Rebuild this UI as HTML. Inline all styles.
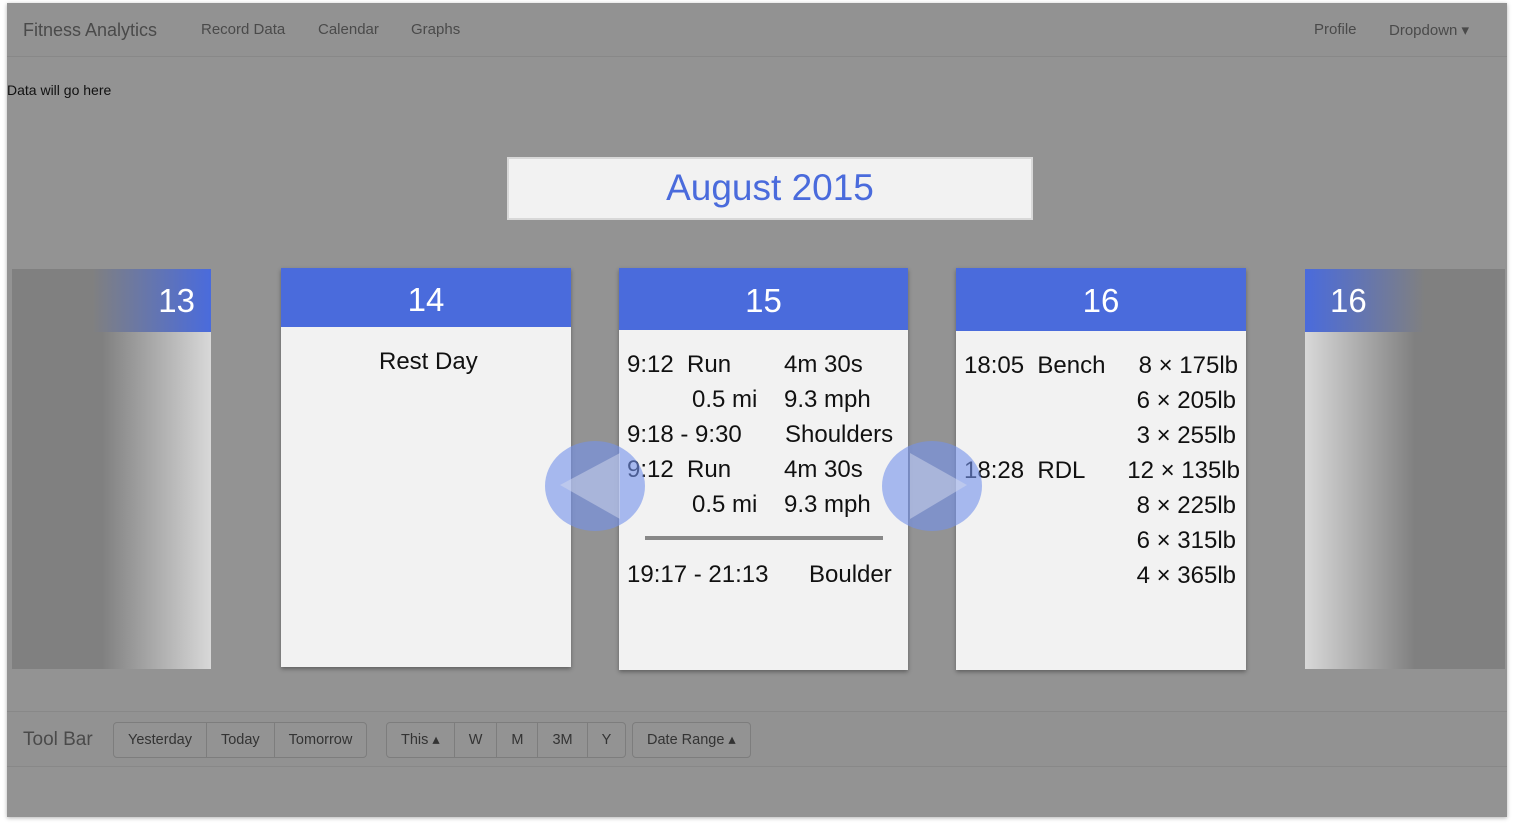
<!DOCTYPE html>
<html><head><style>
*{margin:0;padding:0;box-sizing:border-box}
body{width:1514px;height:827px;background:#fff;position:relative;overflow:hidden;font-family:"Liberation Sans",sans-serif}
.page{position:absolute;left:7px;top:3px;width:1500px;height:814px;background:#939393;box-shadow:0 1px 4px rgba(0,0,0,.3)}
.nav{position:absolute;left:0;top:0;width:1500px;height:54px;border-bottom:1px solid #888;background:#929292}
.nav span{position:absolute;top:18px;font-size:15px;color:#4a4a4a}
.a{position:absolute;font-family:"Liberation Sans",sans-serif}
.card{position:absolute;background:#f2f2f2;box-shadow:0 2px 4px rgba(0,0,0,.35)}
.hd{position:absolute;left:0;top:0;width:100%;background:#4a6bdc;color:#fff;font-size:33px;text-align:center}
.t{position:absolute;font-size:24px;color:#111;white-space:nowrap}
.circ{position:absolute;width:100px;height:90px;border-radius:50%;background:rgba(115,145,235,.6)}
.tb{position:absolute;left:0;top:708px;width:1500px;height:56px;border-top:1px solid #888;border-bottom:1px solid #888;background:#929292}
.grp{position:absolute;top:10px;height:36px;border:1px solid #7d7d7d;border-radius:4px;display:flex;background:#939393}
.grp div{height:34px;line-height:34px;font-size:14.5px;color:#333;padding:0 14px;border-left:1px solid #7d7d7d}
.grp div:first-child{border-left:none}
</style></head><body>
<div class="page">
 <div class="nav">
  <span style="left:16px;top:17px;font-size:18px">Fitness Analytics</span>
  <span style="left:194px">Record Data</span>
  <span style="left:311px">Calendar</span>
  <span style="left:404px">Graphs</span>
  <span style="left:1307px">Profile</span>
  <span style="left:1382px">Dropdown ▾</span>
 </div>
 <div class="a" style="left:0;top:79px;font-size:14px;color:#111">Data will go here</div>
 <div class="a" style="left:500px;top:154px;width:526px;height:63px;background:#f2f2f2;border:2px solid #d8d8d8;text-align:center;font-size:37px;line-height:58px;color:#4a6bdc">August 2015</div>
 <div class="tb">
  <span class="a" style="left:16px;top:17px;font-size:19px;color:#4a4a4a">Tool Bar</span>
  <div class="grp" style="left:106px"><div>Yesterday</div><div>Today</div><div>Tomorrow</div></div>
  <div class="grp" style="left:379px"><div>This ▴</div><div>W</div><div>M</div><div>3M</div><div>Y</div></div>
  <div class="grp" style="left:625px"><div>Date Range ▴</div></div>
 </div>
</div>
<div class="card" style="left:12px;top:269px;width:199px;height:400px;background:linear-gradient(90deg,#808080 0,#808080 90px,#d8d8d8 199px);box-shadow:none">
 <div class="hd" style="height:63px;line-height:63px;text-align:right;padding-right:16px;background:linear-gradient(90deg,#808080 0,#808080 80px,#4a6bdc 199px)">13</div>
</div>
<div class="card" style="left:1305px;top:269px;width:200px;height:400px;background:linear-gradient(90deg,#d8d8d8 0,#808080 110px,#808080 200px);box-shadow:none">
 <div class="hd" style="height:63px;line-height:63px;text-align:left;padding-left:25px;background:linear-gradient(90deg,#4a6bdc 0,#808080 120px,#808080 200px)">16</div>
</div>
<div class="card" style="left:281px;top:268px;width:290px;height:399px">
 <div class="hd" style="height:59px;line-height:64px">14</div>
 <div class="t" style="left:98px;top:80px">Rest Day</div>
</div>
<div class="card" style="left:619px;top:268px;width:289px;height:402px">
 <div class="hd" style="height:62px;line-height:65px">15</div>
 <div class="t" style="left:8px;top:83px">9:12&nbsp; Run</div><div class="t" style="left:165px;top:83px">4m 30s</div>
 <div class="t" style="left:73px;top:118px">0.5 mi</div><div class="t" style="left:165px;top:118px">9.3 mph</div>
 <div class="t" style="left:8px;top:153px">9:18 - 9:30</div><div class="t" style="left:166px;top:153px">Shoulders</div>
 <div class="t" style="left:8px;top:188px">9:12&nbsp; Run</div><div class="t" style="left:165px;top:188px">4m 30s</div>
 <div class="t" style="left:73px;top:223px">0.5 mi</div><div class="t" style="left:165px;top:223px">9.3 mph</div>
 <div style="position:absolute;left:26px;top:268px;width:238px;height:4px;background:#888"></div>
 <div class="t" style="left:8px;top:293px">19:17 - 21:13</div><div class="t" style="left:190px;top:293px">Boulder</div>
</div>
<div class="card" style="left:956px;top:268px;width:290px;height:402px">
 <div class="hd" style="height:63px;line-height:65px">16</div>
 <div class="t" style="left:8px;top:84px">18:05&nbsp; Bench</div>
 <div class="t" style="left:8px;top:189px">18:28&nbsp; RDL</div>
 <div class="t" style="right:8px;top:84px">8 × 175lb</div>
 <div class="t" style="right:10px;top:119px">6 × 205lb</div>
 <div class="t" style="right:10px;top:154px">3 × 255lb</div>
 <div class="t" style="right:6px;top:189px">12 × 135lb</div>
 <div class="t" style="right:10px;top:224px">8 × 225lb</div>
 <div class="t" style="right:10px;top:259px">6 × 315lb</div>
 <div class="t" style="right:10px;top:294px">4 × 365lb</div>
</div>
<div class="circ" style="left:545px;top:441px"></div>
<svg style="position:absolute;left:545px;top:441px" width="100" height="90"><polygon points="15,44 75,12 75,78" fill="rgba(210,215,235,.5)"/></svg>
<div class="circ" style="left:882px;top:441px"></div>
<svg style="position:absolute;left:882px;top:441px" width="100" height="90"><polygon points="85,44 28,12 28,78" fill="rgba(210,215,235,.5)"/></svg>
</body></html>
